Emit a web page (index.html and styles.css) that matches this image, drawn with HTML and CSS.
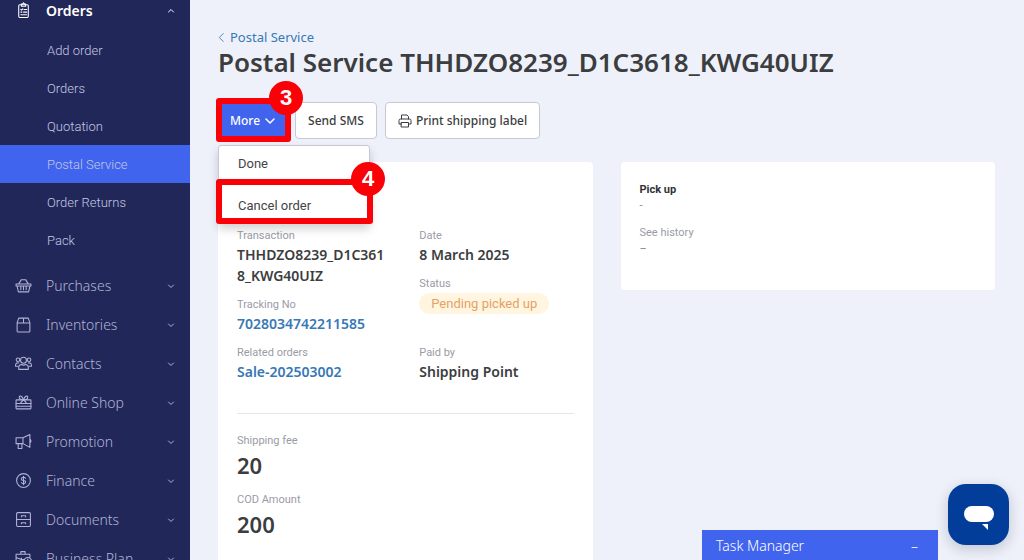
FILE: index.html
```html
<!DOCTYPE html>
<html lang="en">
<head>
  <meta charset="UTF-8">
  <meta name="viewport" content="width=device-width, initial-scale=1">
  <title>Postal Service</title>
  <link rel="stylesheet" href="styles.css">
</head>
<body>
  <div class="layout">
    <nav class="sidebar">
      <a class="menu-item open" href="#">
        <svg class="icon" viewBox="0 0 16 16"><rect x="3.5" y="2.5" width="9" height="12" rx="1"/><path d="M6 4V2h1l1-1.300 1 1.300h1v2zM5.500 7l.7.7L7.300 6.500M8.500 7h2.500M5.500 9.500h1M8 9.500h3M5.500 12h5.500"/></svg>
        <span>Orders</span>
        <svg class="chevron" viewBox="0 0 8 8"><path d="M1.500 5L4 2.500 6.500 5"/></svg>
      </a>
      <div class="submenu">
        <a href="#">Add order</a>
        <a href="#">Orders</a>
        <a href="#">Quotation</a>
        <a class="active" href="#">Postal Service</a>
        <a href="#">Order Returns</a>
        <a href="#">Pack</a>
      </div>
      <a class="menu-item" href="#">
        <svg class="icon" viewBox="0 0 16 16"><path d="M1 6.500h14v2H1zM2 8.500l1.200 5.500h9.600L14 8.500M3.500 6.500L6 2.500h4l2.500 4M5.500 8.500v3.500M8 8.500v3.500M10.500 8.500v3.500"/></svg>
        <span>Purchases</span>
        <svg class="chevron" viewBox="0 0 8 8"><path d="M1.500 3L4 5.500 6.500 3"/></svg>
      </a>
      <a class="menu-item" href="#">
        <svg class="icon" viewBox="0 0 16 16"><path d="M2 6.500L3.500 2h9L14 6.500V14q0 1-1 1H3q-1 0-1-1zM2 6.500h12M8 2v4.500"/></svg>
        <span>Inventories</span>
        <svg class="chevron" viewBox="0 0 8 8"><path d="M1.500 3L4 5.500 6.500 3"/></svg>
      </a>
      <a class="menu-item" href="#">
        <svg class="icon" viewBox="0 0 16 16"><circle cx="8" cy="5" r="2.800"/><circle cx="2.800" cy="4.500" r="1.700"/><circle cx="13.200" cy="4.500" r="1.700"/><path d="M3.500 13.500v-2q0-2 2.500-2.500 2 1 4 0 2.500.5 2.500 2.500v2zM3.500 7.500Q.5 7 .5 10v.5h2M12.500 7.500q3-.5 3 2.500v.5h-2"/></svg>
        <span>Contacts</span>
        <svg class="chevron" viewBox="0 0 8 8"><path d="M1.500 3L4 5.500 6.500 3"/></svg>
      </a>
      <a class="menu-item" href="#">
        <svg class="icon" viewBox="0 0 16 16"><rect x="1" y="5.500" width="14" height="8.500" rx=".5"/><path d="M1 9h14M1 11.500h14M8 5.500C6 5.500 4 4.500 4 3s2.500-2 4 2.500M8 5.500c2 0 4-1 4-2.500s-2.500-2-4 2.500M8 5.500L5.500 8M8 5.500L10.500 8"/></svg>
        <span>Online Shop</span>
        <svg class="chevron" viewBox="0 0 8 8"><path d="M1.500 3L4 5.500 6.500 3"/></svg>
      </a>
      <a class="menu-item" href="#">
        <svg class="icon" viewBox="0 0 16 16"><path d="M1 4.500h6.500L14 1.500v12L7.500 10H1zM7.500 4.500V10M3 10v4.500h3.500V10M14 5.500q2 2 0 4"/></svg>
        <span>Promotion</span>
        <svg class="chevron" viewBox="0 0 8 8"><path d="M1.500 3L4 5.500 6.500 3"/></svg>
      </a>
      <a class="menu-item" href="#">
        <svg class="icon" viewBox="0 0 16 16"><circle cx="8" cy="8" r="6.500"/><path d="M10 6Q9.500 5 8 5 6 5 6 6.500T8 8t2 1.500T8 11q-1.500 0-2-1M8 4v8"/></svg>
        <span>Finance</span>
        <svg class="chevron" viewBox="0 0 8 8"><path d="M1.500 3L4 5.500 6.500 3"/></svg>
      </a>
      <a class="menu-item" href="#">
        <svg class="icon" viewBox="0 0 16 16"><rect x="1.500" y="1.500" width="13" height="13" rx="1"/><path d="M1.500 8h13M6 5.500V4.500h4v1M6 12v-1h4v1"/></svg>
        <span>Documents</span>
        <svg class="chevron" viewBox="0 0 8 8"><path d="M1.500 3L4 5.500 6.500 3"/></svg>
      </a>
      <a class="menu-item" href="#">
        <svg class="icon" viewBox="0 0 16 16"><path d="M9 13.500H1V4h13v3M5.500 4V1.500h4V4M1 7l5 2h3M6 7.500v2.500"/><circle cx="12" cy="10.500" r="3.500"/><path d="M12 8.500v2h1.500"/></svg>
        <span>Business Plan</span>
        <svg class="chevron" viewBox="0 0 8 8"><path d="M1.500 3L4 5.500 6.500 3"/></svg>
      </a>
    </nav>

    <main class="content">
      <a class="back" href="#">
        <svg viewBox="0 0 8 12"><path d="M6 1.500L1.500 6 6 10.500"/></svg>
        Postal Service
      </a>
      <h1>Postal Service THHDZO8239_D1C3618_KWG40UIZ</h1>

      <div class="toolbar">
        <div class="dropdown">
          <button class="btn btn-primary" type="button">More
            <svg class="caret" viewBox="0 0 10 10"><path d="M1 3l4 4 4-4"/></svg>
          </button>
          <div class="step step-more"><span>3</span></div>
          <div class="dropdown-menu">
            <button type="button">Done</button>
            <button type="button">Cancel order</button>
            <div class="step step-cancel"><span>4</span></div>
          </div>
        </div>
        <button class="btn" type="button">Send SMS</button>
        <button class="btn" type="button">
          <svg class="printer" viewBox="0 0 14 14"><path d="M3.500 5V1h5.500l1.500 1.500V5M3.500 10H1V6.500Q1 5 2.500 5h9Q13 5 13 6.500V10h-2.500M3.500 8.500h7V13h-7z"/></svg>
          Print shipping label
        </button>
      </div>

      <div class="cards">
        <section class="card card-order">
          <div class="fields">
            <dl>
              <dt>Transaction</dt>
              <dd>THHDZO8239_D1C3618_KWG40UIZ</dd>
              <dt>Tracking No</dt>
              <dd><a href="#">7028034742211585</a></dd>
            </dl>
            <dl>
              <dt>Date</dt>
              <dd>8 March 2025</dd>
              <dt>Status</dt>
              <dd><span class="status">Pending picked up</span></dd>
            </dl>
            <dl>
              <dt>Related orders</dt>
              <dd><a href="#">Sale-202503002</a></dd>
            </dl>
            <dl>
              <dt>Paid by</dt>
              <dd>Shipping Point</dd>
            </dl>
          </div>
          <dl class="amounts">
            <dt>Shipping fee</dt>
            <dd>20</dd>
            <dt>COD Amount</dt>
            <dd>200</dd>
          </dl>
        </section>

        <section class="card card-pickup">
          <dl>
            <dt class="strong">Pick up</dt>
            <dd>-</dd>
            <dt>See history</dt>
            <dd>–</dd>
          </dl>
        </section>
      </div>
    </main>
  </div>

  <button class="task-manager" type="button"><span>Task Manager</span><span>–</span></button>
  <button class="chat" type="button" aria-label="Chat">
    <svg viewBox="0 0 32 32"><rect x="1" y="7" width="30" height="16" rx="8"/><path d="M19 25h6v6z"/></svg>
  </button>
</body>
</html>
```
FILE: styles.css
```css
* {
  box-sizing: border-box;
}

body {
  margin: 0;
  background: #eef1f9;
  color: #3b3d40;
  font-family: Roboto, "Liberation Sans", sans-serif;
  font-size: 13px;
}

a {
  color: #3878b4;
  text-decoration: none;
}

button {
  font-family: inherit;
  cursor: pointer;
}

svg {
  flex: none;
  fill: none;
  stroke: currentColor;
  stroke-linecap: round;
  stroke-linejoin: round;
}

.layout {
  display: flex;
  height: 100vh;
  overflow: hidden;
}

/* sidebar */
.sidebar {
  flex: none;
  width: 190px;
  background: #222759;
}

.menu-item {
  display: flex;
  align-items: center;
  height: 39px;
  padding: 0 15px;
  color: #b0b4d6;
  font-family: "Noto Sans", sans-serif;
  font-size: 14px;
  font-weight: 300;
}

.menu-item span {
  flex: 1;
  margin-left: 14px;
}

.menu-item.open {
  height: 21px;
  color: #fff;
  font-weight: 600;
}

.icon {
  width: 17px;
  height: 17px;
}

.chevron {
  width: 8px;
  height: 8px;
}

.submenu {
  padding: 10px 0 7px;
}

.submenu a {
  display: flex;
  align-items: center;
  height: 38px;
  padding-left: 47px;
  color: #c3c8e4;
  font-weight: 300;
}

.submenu .active {
  background: #4064ed;
}

/* main column */
.content {
  flex: 1;
  min-width: 0;
  padding: 28px 29px 0 28px;
}

.back {
  display: flex;
  align-items: center;
  gap: 5px;
  font-family: "Noto Sans", sans-serif;
  font-size: 13px;
  line-height: 18px;
}

.back svg {
  width: 7px;
  height: 11px;
}

h1 {
  margin: 0 0 24px;
  font-family: "Noto Sans", sans-serif;
  font-size: 26px;
  font-weight: 600;
  line-height: 32px;
}

.toolbar {
  display: flex;
  gap: 8px;
  margin-bottom: 23px;
}

.btn {
  display: flex;
  align-items: center;
  gap: 4px;
  height: 37px;
  padding: 0 12px;
  border: 1px solid #c6c9d3;
  border-radius: 4px;
  background: #fff;
  color: #3b3d40;
  font-family: "Noto Sans", sans-serif;
  font-size: 12px;
  font-weight: 500;
}

.btn-primary {
  gap: 5px;
  padding: 0 11px;
  border-color: #4064ed;
  background: #4064ed;
  color: #fff;
}

.caret {
  width: 10px;
  height: 10px;
  stroke-width: 1.5;
}

.printer {
  width: 14px;
  height: 14px;
}

.dropdown {
  position: relative;
}

.dropdown-menu {
  position: absolute;
  top: 43px;
  left: 0;
  z-index: 2;
  width: 152px;
  border: 1px solid #c6c9d3;
  border-radius: 3px;
  background: #fff;
  box-shadow: 0 5px 10px rgba(0, 0, 0, 0.18);
}

.dropdown-menu button {
  display: block;
  width: 100%;
  height: 34px;
  padding: 0 19px;
  border: 0;
  background: none;
  color: #444;
  font-size: 13px;
  text-align: left;
}

.dropdown-menu button + button {
  height: 43px;
  padding-top: 8px;
}

/* numbered step markers */
.step {
  position: absolute;
  z-index: 3;
  border: 6px solid #fb0007;
  border-radius: 3px;
  pointer-events: none;
}

.step span {
  position: absolute;
  top: -23px;
  right: -18px;
  width: 34px;
  border-radius: 50%;
  background: #fb0007;
  color: #fff;
  font: bold 22px/34px "Liberation Sans", sans-serif;
  text-align: center;
}

.step-more {
  inset: -4px -4px -3px -2px;
}

.step-cancel {
  inset: 33px -4px -1px -3px;
}

/* cards */
.cards {
  display: grid;
  grid-template-columns: 1fr 1fr;
  align-items: start;
  gap: 28px;
}

.card {
  padding: 20px 19px;
  border-radius: 4px;
  background: #fff;
}

.card-order {
  padding-top: 66px;
}

.card-pickup {
  padding-bottom: 33px;
}

.fields {
  display: grid;
  grid-template-columns: 1fr 1fr;
  gap: 11px 28px;
  padding-bottom: 31px;
  border-bottom: 1px solid #e6e7ea;
}

dl,
dd {
  margin: 0;
}

dt {
  color: #999ca5;
  font-size: 11px;
  line-height: 16px;
}

dd + dt {
  margin-top: 11px;
}

.fields dd {
  font-family: "Noto Sans", sans-serif;
  font-size: 14px;
  font-weight: 600;
  line-height: 21px;
  word-break: break-all;
}

.status {
  display: inline-block;
  padding: 0 12px;
  border-radius: 11px;
  background: #fff5e0;
  color: #e5a263;
  font-family: Roboto, sans-serif;
  font-size: 13px;
  font-weight: 400;
}

.amounts {
  padding: 19px 0;
}

.amounts dd {
  font-family: "Noto Sans", sans-serif;
  font-size: 22px;
  font-weight: 600;
  line-height: 32px;
}

.card-pickup dd {
  color: #888;
  font-size: 11px;
  line-height: 16px;
}

dt.strong {
  color: #303236;
  font-weight: 700;
}

/* floating widgets */
.task-manager {
  position: fixed;
  right: 86px;
  bottom: 0;
  display: flex;
  align-items: center;
  justify-content: space-between;
  width: 236px;
  height: 30px;
  padding: 0 20px 0 14px;
  border: 0;
  background: #4064ed;
  color: #fff;
  font-family: "Noto Sans", sans-serif;
  font-size: 14px;
  font-weight: 300;
}

.chat {
  position: fixed;
  right: 15px;
  bottom: 15px;
  display: flex;
  align-items: center;
  justify-content: center;
  width: 61px;
  height: 61px;
  padding: 0;
  border: 0;
  border-radius: 18px;
  background: #023e99;
  box-shadow: 0 4px 14px rgba(0, 20, 60, 0.2);
  color: #fff;
}

.chat svg {
  width: 32px;
  height: 32px;
  fill: currentColor;
  stroke: none;
}
```
